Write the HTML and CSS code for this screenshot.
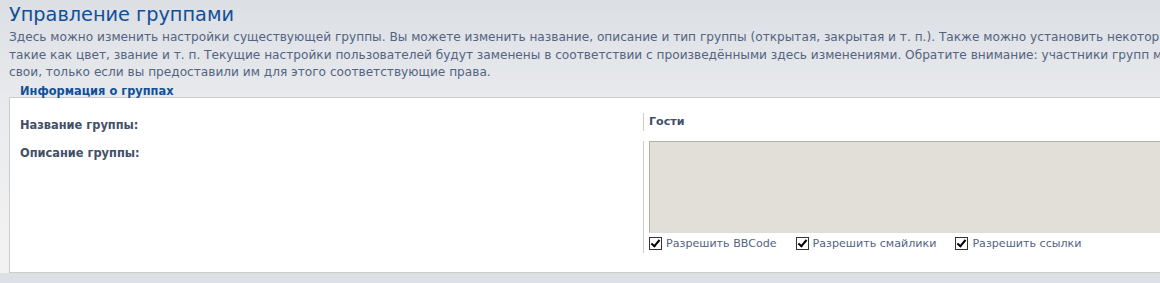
FILE: index.html
```
<!DOCTYPE html>
<html lang="ru">
<head>
  <meta charset="UTF-8">
  <title>Управление группами</title>
  <link rel="stylesheet" href="styles.css">
</head>
<body>
  <div class="page">
    <h1>Управление группами</h1>
    <p class="intro">Здесь можно изменить настройки существующей группы. Вы можете изменить название, описание и тип группы (открытая, закрытая и т. п.). Также можно установить некоторые общие параметры группы,<br>такие как цвет, звание и т. п. Текущие настройки пользователей будут заменены в соответствии с произведёнными здесь изменениями. Обратите внимание: участники групп могут изменять<br>свои, только если вы предоставили им для этого соответствующие права.</p>

    <h3 class="box-title">Информация о группах</h3>
    <div class="box">
      <dl>
        <dt><label>Название группы:</label></dt>
        <dd><strong>Гости</strong></dd>
      </dl>
      <dl>
        <dt><label>Описание группы:</label></dt>
        <dd>
          <textarea rows="5"></textarea>
          <div class="opts">
            <label><input type="checkbox" checked> Разрешить BBCode</label>
            <label><input type="checkbox" checked> Разрешить смайлики</label>
            <label><input type="checkbox" checked> Разрешить ссылки</label>
          </div>
        </dd>
      </dl>
    </div>
  </div>
</body>
</html>
```

FILE: styles.css
```
body {
  margin: 0;
  padding: 0;
  font-family: "DejaVu Sans", Verdana, sans-serif;
  background: #f2f2f2 linear-gradient(to bottom, #dcdfe4 0, #e8eaed 100px, #f2f2f2 250px);
  overflow: hidden;
}

.page {
  width: 1600px;
  padding: 0 9px;
}

h1 {
  margin: 0;
  padding-top: 3px;
  font-size: 19.3px;
  font-weight: normal;
  line-height: 24px;
  color: #115098;
}

.intro {
  margin: 2px 0 0 0;
  font-size: 12.15px;
  line-height: 17.6px;
  white-space: nowrap;
  color: #536482;
}

.box-title {
  margin: 3px 0 0 11px;
  font-size: 11.4px;
  line-height: 12px;
  font-weight: bold;
  color: #115098;
}

.box {
  padding: 15px 0 9px 0;
  border: 1px solid #ccc;
  background: #fff;
}

dl {
  display: flex;
  margin: 0 0 10px 0;
}

dt {
  width: 623px;
  padding: 6px 0 0 10px;
  font-size: 11.4px;
  line-height: 12px;
  font-weight: bold;
  color: #425067;
}

dd {
  margin: 0;
  padding-left: 5px;
  border-left: 1px solid #ccc;
  font-size: 11.1px;
  color: #536482;
}

dd strong {
  display: block;
  padding: 2px 0 3px 0;
  line-height: 13px;
  color: #425067;
}

textarea {
  display: block;
  width: 700px;
  height: 92px;
  margin: 0;
  border: 1px solid #b4b0a8;
  border-bottom-color: #ddd;
  background: #e2ded8;
  resize: none;
  box-sizing: border-box;
}

.opts {
  display: flex;
  gap: 19px;
  height: 19px;
  padding-top: 1px;
  align-items: center;
}

.opts label {
  display: flex;
  align-items: center;
  gap: 4px;
}

.opts input {
  appearance: none;
  position: relative;
  margin: 0;
  width: 13px;
  height: 13px;
  border: 1px solid #333;
  background: #fff;
  box-sizing: border-box;
}

.opts input:checked::after {
  content: "";
  position: absolute;
  left: 3px;
  top: 0px;
  width: 3px;
  height: 7px;
  border-right: 2px solid #000;
  border-bottom: 2px solid #000;
  transform: rotate(40deg);
}
```
